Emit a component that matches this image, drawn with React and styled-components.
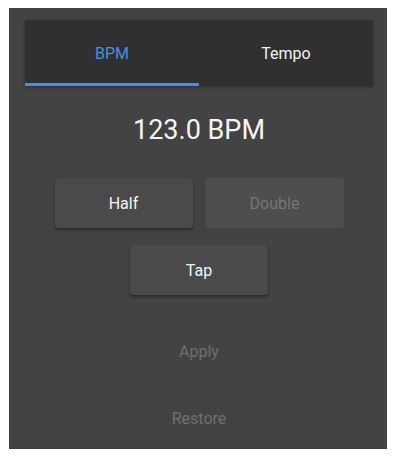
import React, { useState } from "react";
import styled, { createGlobalStyle } from "styled-components";

const GlobalStyle = createGlobalStyle`
  html, body {
    margin: 0;
    padding: 0;
    background: #ffffff;
  }
  body {
    padding: 8px 10px 8px 9px;
    font-family: Roboto, "Liberation Sans", sans-serif;
  }
  * {
    box-sizing: border-box;
  }
`;

const Panel = styled.div`
  width: 378px;
  height: 441px;
  background: #434343;
  padding: 12px 14px 0 16px;
  display: flex;
  flex-direction: column;
  align-items: center;
`;

const TabBar = styled.div`
  width: 100%;
  height: 66px;
  background: #303030;
  display: flex;
  box-shadow: 0 1px 3px rgba(0, 0, 0, 0.35);
`;

const Tab = styled.button`
  flex: 1;
  border: none;
  background: transparent;
  font-family: inherit;
  font-size: 16px;
  color: ${(p) => (p.$active ? "#4a8fe0" : "#f2f2f2")};
  border-bottom: 3px solid ${(p) => (p.$active ? "#4a8fe0" : "transparent")};
  padding: 3px 0 0 0;
  cursor: pointer;
`;

const Display = styled.div`
  margin-top: 28px;
  font-size: 27px;
  line-height: 32px;
  color: #f5f5f5;
`;

const ButtonGrid = styled.div`
  margin-top: 32px;
  display: flex;
  flex-direction: column;
  align-items: center;
  gap: 17px;
`;

const Row = styled.div`
  display: flex;
  gap: 13px;
`;

const RaisedButton = styled.button`
  width: 138px;
  height: 50px;
  border: none;
  border-radius: 3px;
  font-family: inherit;
  font-size: 16px;
  background: ${(p) => (p.disabled ? "#4e4e4e" : "#4a4a4a")};
  color: ${(p) => (p.disabled ? "#767676" : "#f5f5f5")};
  box-shadow: ${(p) =>
    p.disabled ? "none" : "0 2px 3px rgba(0, 0, 0, 0.35), 0 0 1px rgba(0, 0, 0, 0.3)"};
  cursor: ${(p) => (p.disabled ? "default" : "pointer")};
`;

const TextButton = styled.button`
  margin-top: ${(p) => p.$gap}px;
  height: 48px;
  padding: 0 16px;
  border: none;
  background: transparent;
  font-family: inherit;
  font-size: 16px;
  color: #6f6f6f;
`;

export default function App() {
  const [tab, setTab] = useState("bpm");
  const [bpm, setBpm] = useState(123);

  return (
    <>
      <GlobalStyle />
      <Panel>
        <TabBar>
          <Tab $active={tab === "bpm"} onClick={() => setTab("bpm")}>
            BPM
          </Tab>
          <Tab $active={tab === "tempo"} onClick={() => setTab("tempo")}>
            Tempo
          </Tab>
        </TabBar>
        <Display>{bpm.toFixed(1)} BPM</Display>
        <ButtonGrid>
          <Row>
            <RaisedButton onClick={() => setBpm(bpm / 2)}>Half</RaisedButton>
            <RaisedButton disabled>Double</RaisedButton>
          </Row>
          <RaisedButton>Tap</RaisedButton>
        </ButtonGrid>
        <TextButton $gap={32} disabled>
          Apply
        </TextButton>
        <TextButton $gap={19} disabled>
          Restore
        </TextButton>
      </Panel>
    </>
  );
}
